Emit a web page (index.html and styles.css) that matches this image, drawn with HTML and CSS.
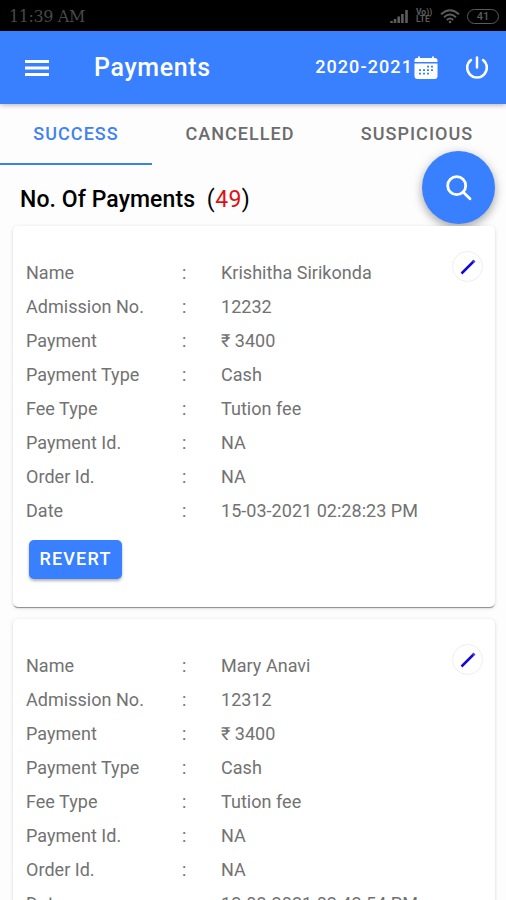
FILE: index.html
```html
<!DOCTYPE html>
<html lang="en">
<head>
<meta charset="utf-8">
<title>Payments</title>
<link rel="stylesheet" href="styles.css">
</head>
<body>
<div class="statusbar">
  <span class="clock">11:39 AM</span>
  <svg class="signal" width="19" height="15" viewBox="0 0 19 15"><path d="M1.500 14v-2M5 14v-4M8.700 14V7.500M12.400 14V5M16.500 14V1" stroke="currentColor" stroke-width="2.600" fill="none"/></svg>
  <span class="volte"><span>Vo))</span><span>LTE</span></span>
  <svg class="wifi" width="20" height="15" viewBox="0 0 20 15" fill="none" stroke="currentColor" stroke-width="1.900"><path d="M1 5.200Q10-2.800 19 5.200M4 8.200Q10 2.800 16 8.200M6.800 11Q10 8 13.200 11"/><circle cx="10" cy="13" r="1.300" fill="currentColor" stroke="none"/></svg>
  <span class="battery">41</span>
</div>
<header class="appbar">
  <svg class="menu" width="24" height="18" viewBox="0 0 24 18"><path d="M0 2.500h24M0 9h24M0 15.500h24" stroke="#fff" stroke-width="2.800"/></svg>
  <h1>Payments</h1>
  <span class="year">2020-2021</span>
  <svg class="calendar" width="24" height="24" viewBox="0 0 24 24">
    <path fill="#fff" d="M3 2h1V.5h2V2h12V.5h2V2h1q2.500 0 2.500 2.500V6H.5V4.500Q.5 2 3 2ZM.5 7.500h23V20q0 3-3 3h-17q-3 0-3-3Z"/>
    <path stroke="#3880ff" stroke-width="1.800" stroke-dasharray="2 2" d="M13 10.700h8M5 14.200h16M5 17.700h12" fill="none"/>
  </svg>
  <svg class="power" width="24" height="24" viewBox="0 0 24 24" fill="none" stroke="#fff" stroke-width="2.500" stroke-linecap="round"><path d="M18 4a9.800 9.800 0 1 1-12 0M12 1.500v10"/></svg>
</header>
<nav class="tabs">
  <span class="tab active">SUCCESS</span>
  <span class="tab">CANCELLED</span>
  <span class="tab">SUSPICIOUS</span>
</nav>
<button class="fab" aria-label="Search"><svg width="28" height="28" viewBox="0 0 28 28" fill="none" stroke="#fff" stroke-width="2.800" stroke-linecap="round"><circle cx="11.700" cy="11.700" r="9"/><path d="M18.300 18.300l6.700 6.500"/></svg></button>
<main>
  <h2>No. Of Payments <span class="count">(<b>49</b>)</span></h2>
  <section class="card">
    <span class="edit"><svg width="16" height="16" viewBox="0 0 16 16"><path d="M1.500 14.500l12-12" stroke="#1408d4" stroke-width="2.500"/><path d="M13 3l1.500-1.500" stroke="#4c46d8" stroke-width="2.800"/></svg></span>
    <dl>
      <dt>Name</dt><i>:</i><dd>Krishitha Sirikonda</dd>
      <dt>Admission No.</dt><i>:</i><dd>12232</dd>
      <dt>Payment</dt><i>:</i><dd>₹ 3400</dd>
      <dt>Payment Type</dt><i>:</i><dd>Cash</dd>
      <dt>Fee Type</dt><i>:</i><dd>Tution fee</dd>
      <dt>Payment Id.</dt><i>:</i><dd>NA</dd>
      <dt>Order Id.</dt><i>:</i><dd>NA</dd>
      <dt>Date</dt><i>:</i><dd>15-03-2021 02:28:23 PM</dd>
    </dl>
    <button class="revert">REVERT</button>
  </section>
  <section class="card">
    <span class="edit"><svg width="16" height="16" viewBox="0 0 16 16"><path d="M1.500 14.500l12-12" stroke="#1408d4" stroke-width="2.500"/><path d="M13 3l1.500-1.500" stroke="#4c46d8" stroke-width="2.800"/></svg></span>
    <dl>
      <dt>Name</dt><i>:</i><dd>Mary Anavi</dd>
      <dt>Admission No.</dt><i>:</i><dd>12312</dd>
      <dt>Payment</dt><i>:</i><dd>₹ 3400</dd>
      <dt>Payment Type</dt><i>:</i><dd>Cash</dd>
      <dt>Fee Type</dt><i>:</i><dd>Tution fee</dd>
      <dt>Payment Id.</dt><i>:</i><dd>NA</dd>
      <dt>Order Id.</dt><i>:</i><dd>NA</dd>
      <dt>Date</dt><i>:</i><dd>12-03-2021 02:42:54 PM</dd>
    </dl>
    <button class="revert">REVERT</button>
  </section>
</main>
</body>
</html>
```
FILE: styles.css
```css
* { box-sizing: border-box; }
html, body { margin: 0; height: 900px; overflow: hidden; }
body { position: relative; background: #fdfdfd; font-family: Roboto, "Noto Sans", sans-serif; color: #000; }

.statusbar { height: 31px; background: #000; color: #5c5c5c; display: flex; align-items: center; padding: 1px 7px 0 9px; }
.clock { flex: 1; font: 16px "DejaVu Serif", serif; color: #484848; letter-spacing: -0.4px; }
.signal { margin-right: 7px; }
.volte { width: 16px; margin-right: 8px; display: flex; flex-direction: column; font-size: 8.500px; line-height: 7.500px; font-weight: 700; }
.wifi { margin-right: 7px; }
.battery { width: 32px; height: 15px; border: 1.500px solid #5c5c5c; border-radius: 8px; font-size: 11px; line-height: 13px; text-align: center; font-weight: 500; }

.appbar { position: relative; height: 73px; background: #3880ff; color: #fff; display: flex; align-items: center; padding: 0 17px 0 25px; box-shadow: 0 1px 5px rgba(0, 0, 0, .3); }
.appbar h1 { margin: 0 0 1px 45px; flex: 1; font-size: 25px; font-weight: 500; letter-spacing: .65px; }
.year { margin-bottom: 2px; font-size: 18px; font-weight: 500; letter-spacing: 1.100px; }
.calendar { margin: 0 27px 0 1px; }

.tabs { height: 61px; display: grid; grid-template-columns: 152px 176px 1fr; }
.tab { display: flex; align-items: center; justify-content: center; font-size: 18px; font-weight: 500; letter-spacing: 1.050px; color: #6c6c6c; border-bottom: 2px solid transparent; }
.tab.active { color: #3f83f0; border-color: #3d80ec; }

.fab { position: absolute; left: 422px; top: 151px; width: 73px; height: 73px; border: 0; border-radius: 50%; background: #3880ff; padding: 0; display: flex; align-items: center; justify-content: center; box-shadow: 0 4px 8px rgba(0, 0, 0, .28), 0 1px 14px rgba(0, 0, 0, .1); }

main { padding: 0 11px 0 13px; }
h2 { margin: 0; height: 61px; padding: 20px 0 0 7px; font-size: 23px; line-height: 30px; font-weight: 500; letter-spacing: .08px; }
.count { margin-left: 6px; font-weight: 400; letter-spacing: .4px; }
.count b { font-weight: 400; color: #e01010; }

.card { position: relative; height: 381px; margin-bottom: 12px; padding: 30px 13px 0; background: #fff; border-radius: 5px; box-shadow: 0 2px 1px -1px rgba(0, 0, 0, .3), 0 1px 1px rgba(0, 0, 0, .14), 0 1px 4px rgba(0, 0, 0, .13); }
.edit { position: absolute; right: 12px; top: 25px; width: 31px; height: 31px; border: 1px solid #eee; border-radius: 50%; display: flex; align-items: center; justify-content: center; }
dl { margin: 0; display: grid; grid-template-columns: 156px 39px 1fr; grid-auto-rows: 34px; font-size: 18px; line-height: 34px; letter-spacing: .03px; color: #727272; }
dt, dd { margin: 0; white-space: nowrap; }
i { font-style: normal; }
.revert { display: block; margin: 12px 0 0 3px; width: 93px; height: 39px; padding: 0 0 2px; border: 0; border-radius: 5px; background: #3880ff; color: #fff; font: 500 18px Roboto, sans-serif; letter-spacing: 1.200px; box-shadow: 0 2px 3px rgba(0, 0, 0, .3); }
```
